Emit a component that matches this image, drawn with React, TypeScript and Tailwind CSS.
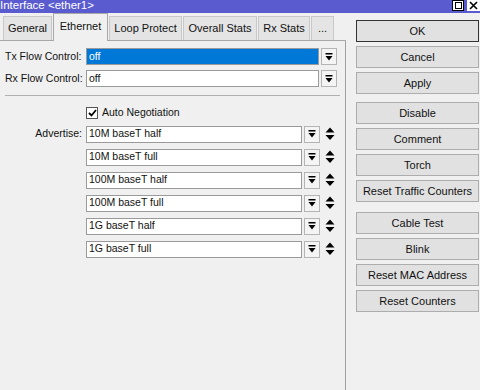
import React from "react";

const tabs = [
  { label: "General", w: "w-[49px]" },
  { label: "Ethernet", w: "w-[55px]", active: true },
  { label: "Loop Protect", w: "w-[73px]" },
  { label: "Overall Stats", w: "w-[74px]" },
  { label: "Rx Stats", w: "w-[52px]" },
  { label: "...", w: "w-[23px]" },
];

const advertise = [
  "10M baseT half",
  "10M baseT full",
  "100M baseT half",
  "100M baseT full",
  "1G baseT half",
  "1G baseT full",
];

function DropIcon() {
  return (
    <svg width="8" height="8" viewBox="0 0 8 8">
      <rect x="0.5" y="0" width="7" height="1.5" fill="#000" />
      <polygon points="0.5,3 7.5,3 4,7.5" fill="#000" />
    </svg>
  );
}

function DropButton() {
  return (
    <div className="flex h-[17px] w-[16px] items-center justify-center border border-[#b4b4b4] bg-[#f4f4f4]">
      <DropIcon />
    </div>
  );
}

function UpDown() {
  return (
    <svg width="10" height="14" viewBox="0 0 10 14">
      <polygon points="5,0.5 9.5,5.5 0.5,5.5" fill="#000" />
      <polygon points="0.5,8 9.5,8 5,13" fill="#000" />
    </svg>
  );
}

function Btn({ label, primary }: { label: string; primary?: boolean }) {
  return (
    <div
      className={`flex h-[22px] items-center justify-center whitespace-nowrap bg-[#e1e1e1] text-[11px] text-[#111] border ${
        primary ? "border-[#333]" : "border-[#adadad]"
      }`}
    >
      {label}
    </div>
  );
}

export default function App() {
  return (
    <div
      className="relative h-[390px] w-[480px] overflow-hidden bg-[#f0f0f0] text-[10.5px] text-[#111]"
      style={{ fontFamily: '"Liberation Sans", Arial, sans-serif' }}
    >
      {/* title bar */}
      <div className="flex h-[13px] items-start justify-between bg-[#5b5bd0]">
        <span className="-mt-px text-[11.5px] leading-[13px] text-white">Interface &lt;ether1&gt;</span>
        <div className="flex items-start gap-[3px]">
          <div className="flex h-[11px] w-[12px] items-center justify-center border border-black bg-white">
            <div className="h-[7px] w-[7px] border border-black" />
          </div>
          <div className="flex h-[11px] w-[13px] items-center justify-center bg-white">
            <svg width="9" height="9" viewBox="0 0 9 9">
              <path d="M1 1 L8 8 M8 1 L1 8" stroke="#000" strokeWidth="1.6" />
            </svg>
          </div>
        </div>
      </div>

      <div className="flex">
        {/* left panel */}
        <div className="flex h-[377px] w-[346px] flex-col">
          <div className="flex h-[28px] items-end border-b border-[#a8a8a8] pl-[2px]">
            {tabs.map((t) =>
              t.active ? (
                <div
                  key={t.label}
                  className={`${t.w} -mb-px ml-[1px] flex h-[28px] items-center justify-center whitespace-nowrap border border-b-0 border-[#a8a8a8] bg-[#f0f0f0] pb-[2px] text-[11px]`}
                >
                  {t.label}
                </div>
              ) : (
                <div
                  key={t.label}
                  className={`${t.w} ml-[1px] flex h-[24px] items-center justify-center whitespace-nowrap border border-b-0 border-[#c8c8c8] bg-[#e4e4e4] text-[11px]`}
                >
                  {t.label}
                </div>
              )
            )}
          </div>

          <div className="flex-1 border-r border-[#a0a0a0] pt-[7px]">
            <div className="flex items-center">
              <div className="w-[83px] whitespace-nowrap pl-[5px]">Tx Flow Control:</div>
              <div className="ml-[3px] flex h-[17px] w-[233px] items-center border border-[#9a9a9a] bg-[#0078d7] pl-[2px] text-white">
                off
              </div>
              <div className="ml-[2px]">
                <DropButton />
              </div>
            </div>
            <div className="mt-[5px] flex items-center">
              <div className="w-[83px] whitespace-nowrap pl-[5px]">Rx Flow Control:</div>
              <div className="ml-[3px] flex h-[17px] w-[233px] items-center border border-[#9a9a9a] bg-white pl-[2px]">
                off
              </div>
              <div className="ml-[2px]">
                <DropButton />
              </div>
            </div>

            <div className="mx-[5px] mt-[8px] h-px bg-[#b0b0b0]" />

            <div className="mt-[9px] flex items-center pl-[86px]">
              <div className="flex h-[12px] w-[12px] items-center justify-center border border-[#555] bg-white">
                <svg width="9" height="8" viewBox="0 0 9 8">
                  <path d="M1 4 L3.5 6.5 L8 1" stroke="#000" strokeWidth="1.8" fill="none" />
                </svg>
              </div>
              <span className="ml-[4px]">Auto Negotiation</span>
            </div>

            <div className="mt-[5px] flex flex-col gap-[6px]">
              {advertise.map((a, i) => (
                <div key={a} className="flex items-center">
                  <div className="w-[83px] whitespace-nowrap pr-[1px] text-right">{i === 0 ? "Advertise:" : ""}</div>
                  <div className="ml-[3px] flex h-[17px] w-[216px] items-center border border-[#9a9a9a] bg-white pl-[2px]">
                    {a}
                  </div>
                  <div className="ml-[2px]">
                    <DropButton />
                  </div>
                  <div className="ml-[5px] flex items-center">
                    <UpDown />
                  </div>
                </div>
              ))}
            </div>
          </div>
        </div>

        {/* right buttons */}
        <div className="ml-[10px] flex w-[123px] flex-col pt-[7px]">
          <div className="flex flex-col gap-[4px]">
            <Btn label="OK" primary />
            <Btn label="Cancel" />
            <Btn label="Apply" />
          </div>
          <div className="mt-[8px] flex flex-col gap-[4px]">
            <Btn label="Disable" />
            <Btn label="Comment" />
            <Btn label="Torch" />
            <Btn label="Reset Traffic Counters" />
          </div>
          <div className="mt-[10px] flex flex-col gap-[4px]">
            <Btn label="Cable Test" />
            <Btn label="Blink" />
            <Btn label="Reset MAC Address" />
            <Btn label="Reset Counters" />
          </div>
        </div>
      </div>
    </div>
  );
}
